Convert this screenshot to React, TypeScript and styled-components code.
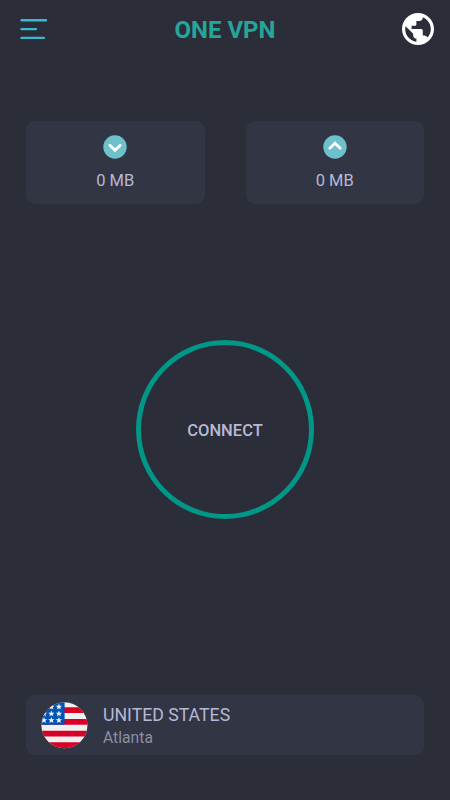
import React from "react";
import styled, { createGlobalStyle } from "styled-components";

const GlobalStyle = createGlobalStyle`
  * { box-sizing: border-box; }
  body { margin: 0; background: #2b2d38; }
`;

const Screen = styled.main`
  display: flex;
  flex-direction: column;
  width: 450px;
  height: 800px;
  padding: 0 26px 45px;
  background: #2b2d38;
  color: #b6b9d5;
  font-family: Roboto, sans-serif;
`;

const Header = styled.header`
  display: grid;
  grid-template-columns: 38px 1fr 38px;
  align-items: center;
  height: 58px;
  margin: 0 -10px 63px -6px;
`;

const IconButton = styled.button<{ $align: "start" | "end" }>`
  display: flex;
  justify-content: ${(p) => p.$align};
  padding: 0;
  border: 0;
  background: none;
`;

const Title = styled.h1`
  margin: 2px 0 0;
  padding-right: 4px;
  color: #26a69a;
  font-size: 24px;
  font-weight: 700;
  line-height: 28px;
  text-align: center;
  white-space: nowrap;
`;

const Stats = styled.section`
  display: grid;
  grid-template-columns: 1fr 1fr;
  gap: 41px;
`;

const StatCard = styled.div`
  display: flex;
  flex-direction: column;
  align-items: center;
  height: 83px;
  padding-top: 14px;
  border-radius: 9px;
  background: #323544;
`;

const StatValue = styled.span`
  margin-top: 11px;
  font-size: 16.5px;
  line-height: 21px;
`;

const Center = styled.section`
  display: flex;
  flex: 1;
  align-items: center;
  justify-content: center;
  padding-bottom: 41px;
`;

const ConnectButton = styled.button`
  width: 178px;
  height: 179px;
  padding: 3px 0 0;
  border: 5px solid #009688;
  border-radius: 50%;
  background: none;
  color: inherit;
  font: 500 16.5px/20px Roboto, sans-serif;
`;

const ServerCard = styled.section`
  display: flex;
  align-items: center;
  gap: 15px;
  height: 60px;
  padding-left: 15px;
  border-radius: 9px;
  background: #323544;
`;

const ServerText = styled.div`
  display: flex;
  flex-direction: column;
  padding-top: 2px;
`;

const Country = styled.span`
  font-size: 17.7px;
  line-height: 22px;
`;

const City = styled.span`
  color: #8b8ea4;
  font-size: 15.7px;
  line-height: 23px;
`;

function MenuIcon() {
  return (
    <svg width="28" height="24" viewBox="0 0 28 24" stroke="#3bb8cd" strokeWidth="2.4" strokeLinecap="round">
      <path d="M1.5 3.2H26M1.5 12.1H16M1.5 20.9H23.8" />
    </svg>
  );
}

function GlobeIcon() {
  return (
    <svg width="32" height="32" viewBox="2 2 20 20" fill="#fff">
      <path d="M12 2C6.48 2 2 6.48 2 12s4.48 10 10 10 10-4.48 10-10S17.52 2 12 2zm-1 17.93c-3.95-.49-7-3.85-7-7.93 0-.62.08-1.21.21-1.79L9 15v1c0 1.1.9 2 2 2v1.93zm6.9-2.54c-.26-.81-1-1.39-1.9-1.39h-1v-3c0-.55-.45-1-1-1H8v-2h2c.55 0 1-.45 1-1V7h2c1.1 0 2-.9 2-2v-.41c2.93 1.19 5 4.06 5 7.41 0 2.08-.8 3.97-2.1 5.39z" />
    </svg>
  );
}

function ArrowIcon({ up = false }: { up?: boolean }) {
  return (
    <svg width="24" height="24" viewBox="0 0 24 24" fill="none">
      <circle cx="12" cy="12" r="11.7" fill="#6ec1cb" />
      <path
        d={up ? "M6.8 13.3L12 8.2l5.2 5.1" : "M6.8 10.2l5.2 5.1 5.2-5.1"}
        stroke="#fff"
        strokeWidth="2.7"
        strokeLinecap="round"
        strokeLinejoin="miter"
      />
    </svg>
  );
}

const STAR = "M0-3.2L.85-1 3.2-1 1.35.5 2 2.8 0 1.4-2 2.8-1.35.5-3.2-1-.85-1Z";
const STARS = [
  [10.4, 4.8], [17.9, 4.8],
  [3, 11.7], [10.4, 11.7], [17.9, 11.7],
  [3, 18.3], [10.4, 18.3], [17.9, 18.3],
];

function FlagIcon() {
  return (
    <svg width="47" height="47" viewBox="0 0 47 47">
      <clipPath id="flag-disc">
        <circle cx="23.4" cy="23.2" r="23" />
      </clipPath>
      <g clipPath="url(#flag-disc)">
        <path fill="#f0f0f0" d="M0 0h47v47H0z" />
        <path fill="#d80027" d="M0 5.3h47v5.8H0zM0 17h47v5.8H0zM0 28.7h47v5.7H0zM0 40.2h47V47H0z" />
        <path fill="#0052b4" d="M0 0h23.6v22.8H0z" />
        {STARS.map(([x, y]) => (
          <path key={`${x}-${y}`} d={STAR} fill="#f0f0f0" transform={`translate(${x} ${y})`} />
        ))}
      </g>
    </svg>
  );
}

export default function App() {
  return (
    <>
      <GlobalStyle />
      <Screen>
        <Header>
          <IconButton $align="start" aria-label="Menu">
            <MenuIcon />
          </IconButton>
          <Title>ONE VPN</Title>
          <IconButton $align="end" aria-label="Servers">
            <GlobeIcon />
          </IconButton>
        </Header>
        <Stats>
          <StatCard>
            <ArrowIcon />
            <StatValue>0 MB</StatValue>
          </StatCard>
          <StatCard>
            <ArrowIcon up />
            <StatValue>0 MB</StatValue>
          </StatCard>
        </Stats>
        <Center>
          <ConnectButton>CONNECT</ConnectButton>
        </Center>
        <ServerCard>
          <FlagIcon />
          <ServerText>
            <Country>UNITED STATES</Country>
            <City>Atlanta</City>
          </ServerText>
        </ServerCard>
      </Screen>
    </>
  );
}
